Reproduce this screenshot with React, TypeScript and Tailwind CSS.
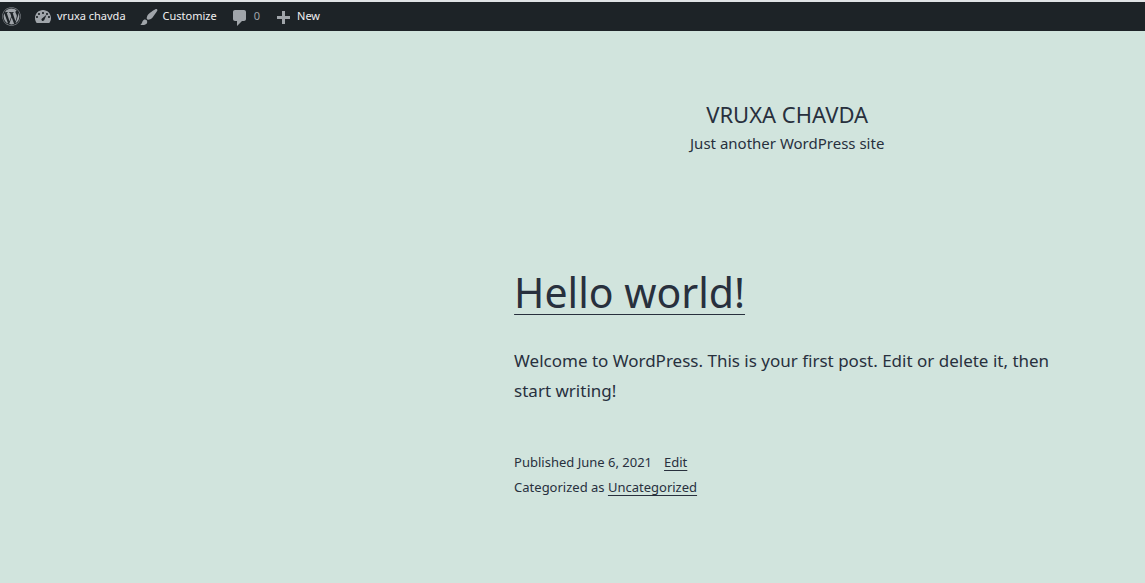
import type { ReactNode } from "react";
import { FaWordpress } from "react-icons/fa";

function BarIcon({ d }: { d: string }) {
  return (
    <svg viewBox="0 0 20 20" aria-hidden="true" className="size-5 shrink-0 fill-[#a0a5aa]">
      <path d={d} />
    </svg>
  );
}

const icons = {
  dashboard:
    "M3.76 16h12.48C17.34 14.63 18 12.89 18 11c0-4.41-3.58-8-8-8s-8 3.59-8 8c0 1.89.66 3.63 1.76 5zM10 5c.55 0 1 .45 1 1s-.45 1-1 1c-.56 0-1-.45-1-1s.44-1 1-1zM6 6c.55 0 1 .45 1 1s-.45 1-1 1c-.56 0-1-.45-1-1s.44-1 1-1zm8 0c.55 0 1 .45 1 1s-.45 1-1 1c-.56 0-1-.45-1-1s.44-1 1-1zM9.6 11.1L13.5 7.800l-2.100 5c-.3.7-.8 1.200-1.500 1.200-.8 0-1.500-.7-1.500-1.500 0-.6.5-1 1.200-1.400zM4 9c.55 0 1 .45 1 1s-.45 1-1 1c-.56 0-1-.45-1-1s.44-1 1-1zm12 0c.55 0 1 .45 1 1s-.45 1-1 1c-.56 0-1-.45-1-1s.44-1 1-1z",
  brush:
    "M18.33 3.57s.27-.8-.31-1.36c-.53-.52-1.22-.24-1.22-.24-.61.3-5.76 3.47-7.67 5.57-.86.96-2.06 3.79-1.09 4.82.92.98 3.96-.17 4.79-1 2.06-2.06 5.21-7.17 5.5-7.79zM1.4 17.65c2.37-1.56 1.46-3.41 3.23-4.64.93-.65 2.22-.62 3.08.29.63.67.8 2.57-.16 3.46-1.57 1.45-4 1.55-6.15.89z",
  comment:
    "M5 3h9c1.1 0 2 .9 2 2v7c0 1.1-.9 2-2 2h-2l-5 5v-5H5c-1.1 0-2-.9-2-2V5c0-1.1.9-2 2-2z",
  plus: "M17 9v3h-5v5H9v-5H4V9h5V4h3v5h5z",
};

function BarLink({ children }: { children: ReactNode }) {
  return (
    <a href="#" className="flex items-center gap-1 text-[#f0f0f1]">
      {children}
    </a>
  );
}

function TextLink({ children }: { children: ReactNode }) {
  return (
    <a href="#" className="underline decoration-1 underline-offset-3">
      {children}
    </a>
  );
}

export default function App() {
  return (
    <div className="min-h-screen bg-[#d1e4dd] font-['Segoe_UI','Noto_Sans',sans-serif] text-[#28303d]">
      <nav
        aria-label="Toolbar"
        className="flex h-[31px] items-center gap-3 border-t-2 border-[#dfe3e5] bg-[#1d2327] pl-0.5 text-[11px]"
      >
        <a href="#" aria-label="About WordPress" className="text-[#a0a5aa]">
          <FaWordpress className="size-[19px]" />
        </a>
        <div className="flex items-center gap-[13px]">
          <BarLink>
            <BarIcon d={icons.dashboard} />
            vruxa chavda
          </BarLink>
          <BarLink>
            <BarIcon d={icons.brush} />
            Customize
          </BarLink>
          <a href="#" aria-label="0 comments" className="flex items-center gap-1 text-[#a0a5aa]">
            <BarIcon d={icons.comment} />
            0
          </a>
          <BarLink>
            <BarIcon d={icons.plus} />
            New
          </BarLink>
        </div>
      </nav>
      <div className="mr-[7.4%] ml-[44.9%] pt-[68px]">
        <header className="text-center">
          <p className="text-[22px] leading-[30px] uppercase">
            <a href="#">vruxa chavda</a>
          </p>
          <p className="text-[15px] leading-7">Just another WordPress site</p>
        </header>
        <main className="pt-[107px]">
          <article>
            <h1 className="text-[41px] leading-[56px] font-normal">
              <a href="#" className="underline decoration-1 underline-offset-6">
                Hello world!
              </a>
            </h1>
            <p className="mt-[26px] text-[17px] leading-[30px]">
              Welcome to WordPress. This is your first post. Edit or delete it, then start writing!
            </p>
            <footer className="mt-11 text-[13px] leading-[25px]">
              <p>
                <span className="mr-3">Published June 6, 2021</span>
                <TextLink>Edit</TextLink>
              </p>
              <p>
                Categorized as <TextLink>Uncategorized</TextLink>
              </p>
            </footer>
          </article>
        </main>
      </div>
    </div>
  );
}
